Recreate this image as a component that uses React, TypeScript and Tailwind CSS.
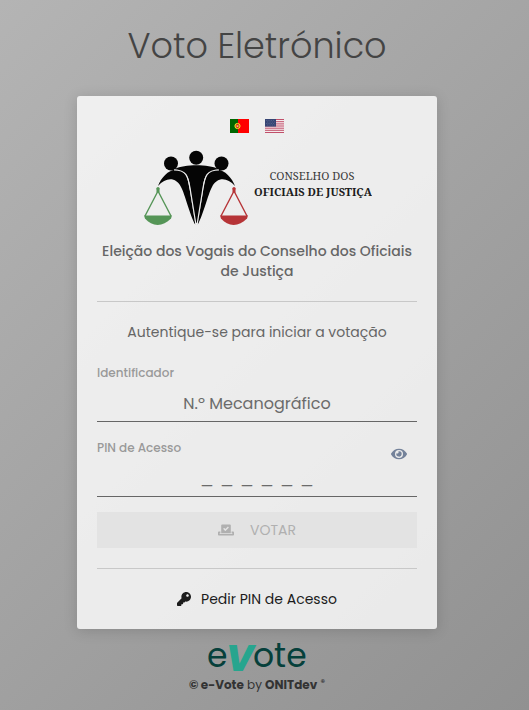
import React, { useState } from 'react';
import { FaEye, FaKey, FaVoteYea } from 'react-icons/fa';

function FlagPT() {
  return (
    <svg viewBox="0 0 19 14" className="h-[14px] w-[19px]" aria-hidden="true">
      <path fill="#f00" d="M0 0h19v14H0z" />
      <path fill="#060" d="M0 0h8v14H0z" />
      <circle cx="7.5" cy="7" r="2.6" fill="#c33c12" stroke="#f1e62a" strokeWidth="1" />
      <path d="M5 5.5l5 3M5 8.5l5-3" stroke="#f1e62a" strokeWidth=".6" />
      <path d="M6.8 6h1.4v1.6l-.7.6-.7-.6z" fill="#fff" stroke="#e00" strokeWidth=".6" />
    </svg>
  );
}

function FlagUS() {
  return (
    <svg viewBox="0 0 19 14" className="h-[14px] w-[19px]" aria-hidden="true">
      <path fill="#f5e9ec" d="M0 0h19v14H0z" />
      <path
        d="M0 .5h19M0 2.7h19M0 4.9h19M0 7h19M0 9.2h19M0 11.3h19M0 13.5h19"
        stroke="#c0506a"
        strokeWidth="1"
      />
      <path fill="#364574" d="M0 0h11v7.6H0z" />
      <path
        d="M1 1.5h9M2 3h8M1 4.5h9M2 6h8"
        stroke="#8c96b5"
        strokeWidth=".5"
        strokeDasharray=".6 1.2"
      />
    </svg>
  );
}

function CouncilLogo() {
  return (
    <svg
      viewBox="0 0 230 76"
      className="h-[76px] w-[230px]"
      role="img"
      aria-label="Conselho dos Oficiais de Justiça"
    >
      <g fill="#050505" transform="translate(2 1)">
        <circle cx="27" cy="12.5" r="7" />
        <circle cx="52.2" cy="6.8" r="7" />
        <circle cx="77.5" cy="12.5" r="7" />
        <path d="M31 18C40 13 65 13 74 18C62 21 60 26 59 36L54 72H51L46 36C45 26 43 21 31 18Z" />
        <path d="M14 35C17 27 24 19 32 18.5C43 20 44 28 46 40L51.5 74C46 65 41 43 37 36C32 26 22 26 14 35Z" />
        <path d="M91 35C88 27 81 19 73 18.5C62 20 61 28 59 40L53.5 74C59 65 64 43 68 36C73 26 83 26 91 35Z" />
      </g>
      <path
        d="M32 20C45 20 46 27 48 38L54 75M77 20C64 20 63 27 61 38L55 75"
        fill="none"
        stroke="#ededed"
        strokeWidth="1.2"
      />
      <g fill="#559557" transform="translate(2 0)">
        <circle cx="14" cy="38.5" r="1.6" />
        <path d="M12.5 38.5h3v4h-3z" />
        <path d="M0 65.5h28l-1 3C19 77 8 77 1 68.5z" />
        <path d="M14 41L1 66M14 41L27 66" fill="none" stroke="#559557" strokeWidth="1.4" />
      </g>
      <g fill="#b63437" transform="translate(1 0)">
        <circle cx="91" cy="38.5" r="1.6" />
        <path d="M89.5 38.5h3v4h-3z" />
        <path d="M77 65.5h28l-1 3C96 77 85 77 78 68.5z" />
        <path d="M91 41L78 66M91 41L104 66" fill="none" stroke="#b63437" strokeWidth="1.4" />
      </g>
      <g fontFamily="'Noto Serif', 'Liberation Serif', serif" fontSize="11" textAnchor="middle">
        <text x="170" y="30" fill="#3a3a3a">
          CONSELHO DOS
        </text>
        <text x="171" y="46" fontWeight="700" fill="#1c1c1c">
          OFICIAIS DE JUSTIÇA
        </text>
      </g>
    </svg>
  );
}

function EVoteLogo() {
  return (
    <svg
      viewBox="0 0 102 32"
      className="h-8 w-[102px] overflow-visible"
      role="img"
      aria-label="eVote"
    >
      <g fontFamily="Poppins, Inter, sans-serif" fill="#06403b">
        <text x="1" y="26" fontSize="33">e</text>
        <text x="47" y="26" fontSize="33">ote</text>
        <text x="20" y="30" fontSize="37" fontWeight="800" fontStyle="italic" fill="#27a58e">
          V
        </text>
      </g>
    </svg>
  );
}

export default function App() {
  const [showPin, setShowPin] = useState(false);

  return (
    <div className="min-h-screen bg-linear-135 from-[#b4b4b4] to-[#919191] pr-[15px] font-['Poppins','Inter',sans-serif]">
      <main className="mx-auto flex w-full max-w-[360px] flex-col items-center pt-5">
        <h1 className="text-[35px] leading-[52px] font-light whitespace-nowrap text-[#444]">
          Voto Eletrónico
        </h1>

        <section className="mt-6 w-full rounded-[3px] bg-white/80 p-5 text-center shadow-[0_2px_14px_rgba(0,0,0,0.15)]">
          <div className="flex justify-center gap-4 pt-[3px]">
            <button type="button" aria-label="Português">
              <FlagPT />
            </button>
            <button type="button" aria-label="English">
              <FlagUS />
            </button>
          </div>

          <div className="mt-[17px] flex justify-center">
            <CouncilLogo />
          </div>

          <h2 className="mt-[15px] text-sm leading-5 font-medium text-[#666]">
            Eleição dos Vogais do Conselho dos Oficiais de Justiça
          </h2>

          <hr className="my-5 border-[#c8c8c8]" />

          <p className="text-sm leading-5 text-[#666]">Autentique-se para iniciar a votação</p>

          <form className="mt-[21px]" onSubmit={(e) => e.preventDefault()}>
            <div className="border-b border-[#666] text-left">
              <label htmlFor="identifier" className="block text-xs leading-5 font-medium text-[#999]">
                Identificador
              </label>
              <input
                id="identifier"
                type="text"
                placeholder="N.º Mecanográfico"
                className="mt-[2px] block h-9 w-full text-center text-base text-[#666] outline-none placeholder:text-[#6b6b6b]"
              />
            </div>

            <div className="mt-4 border-b border-[#666] text-left">
              <div className="flex h-6 justify-between">
                <label htmlFor="pin" className="text-xs leading-5 font-medium text-[#999]">
                  PIN de Acesso
                </label>
                <button
                  type="button"
                  aria-label="Mostrar PIN"
                  onClick={() => setShowPin(!showPin)}
                  className="mr-2.5 self-end text-[#74829a]"
                >
                  <FaEye className="size-4" />
                </button>
              </div>
              <input
                id="pin"
                type={showPin ? 'text' : 'password'}
                maxLength={6}
                placeholder="_  _  _  _  _  _"
                className="block h-[34px] w-full pb-1.5 text-center font-['Liberation_Sans',sans-serif] text-lg text-[#666] outline-none placeholder:text-[#6b6b6b]"
              />
            </div>

            <button
              type="submit"
              disabled
              className="mt-[15px] flex h-9 w-full items-center justify-center gap-4 bg-[#e3e3e3] text-sm text-[#b0b0b0]"
            >
              <FaVoteYea className="size-4" />
              VOTAR
            </button>
          </form>

          <hr className="my-5 border-[#c8c8c8]" />

          <a href="#pedir-pin" className="flex items-center justify-center gap-2.5 text-sm leading-5 text-[#1c1c1c]">
            <FaKey className="size-[14px]" />
            Pedir PIN de Acesso
          </a>
        </section>

        <footer className="flex flex-col items-center pt-3 text-xs leading-5 text-[#333]">
          <EVoteLogo />
          <p className="mt-[2px]">
            <b>© e-Vote</b> by <b>ONITdev</b> <sup className="text-[9px] font-medium">®</sup>
          </p>
        </footer>
      </main>
    </div>
  );
}
